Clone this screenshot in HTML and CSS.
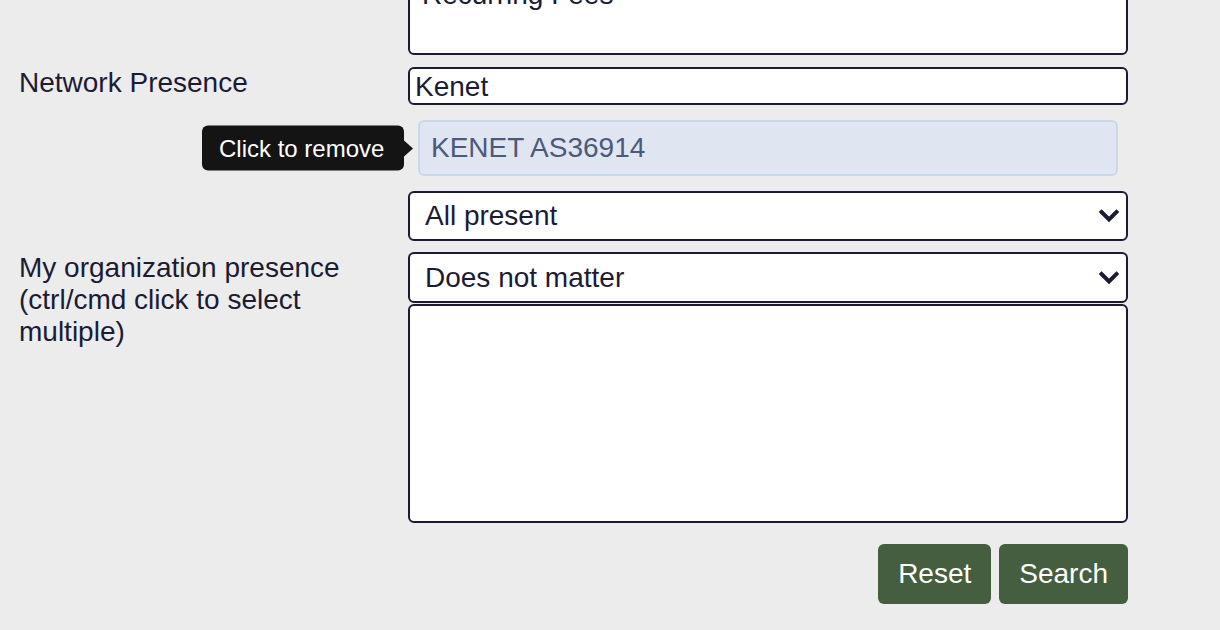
FILE: index.html
```html
<!DOCTYPE html>
<html>
<head>
<meta charset="utf-8">
<link rel="stylesheet" href="styles.css">
</head>
<body>
<form class="form">
  <div class="row row-fees">
    <div class="label"></div>
    <div class="field">
      <textarea class="textarea">Recurring Fees</textarea>
    </div>
  </div>
  <div class="row row-network">
    <div class="label">Network Presence</div>
    <div class="field">
      <input class="input" type="text" value="Kenet">
    </div>
  </div>
  <div class="row row-chip">
    <div class="label"></div>
    <div class="field">
      <div class="chip">
        KENET AS36914
        <div class="tooltip">Click to remove</div>
      </div>
    </div>
  </div>
  <div class="row row-present">
    <div class="label"></div>
    <div class="field">
      <div class="select-wrap">
        <select class="select"><option>All present</option></select>
        <svg class="chevron" width="20" height="14" viewBox="0 0 20 14"><path d="M2.5 3 L10 10.5 L17.5 3" fill="none" stroke="#1b1b33" stroke-width="4" stroke-linecap="square"/></svg>
      </div>
    </div>
  </div>
  <div class="row row-org">
    <div class="label label-org">My organization presence (ctrl/cmd click to select multiple)</div>
    <div class="field field-stack">
      <div class="select-wrap">
        <select class="select"><option>Does not matter</option></select>
        <svg class="chevron" width="20" height="14" viewBox="0 0 20 14"><path d="M2.5 3 L10 10.5 L17.5 3" fill="none" stroke="#1b1b33" stroke-width="4" stroke-linecap="square"/></svg>
      </div>
      <select class="multi" multiple></select>
    </div>
  </div>
  <div class="row row-buttons">
    <div class="label"></div>
    <div class="field buttons">
      <button type="button" class="btn">Reset</button>
      <button type="button" class="btn">Search</button>
    </div>
  </div>
</form>
</body>
</html>
```

FILE: styles.css
```css
html, body {
  margin: 0;
  padding: 0;
  background: #ececec;
  overflow: hidden;
}
body {
  font-family: "Liberation Sans", Arial, Helvetica, sans-serif;
  color: #1b1b33;
  font-size: 28px;
  line-height: 32px;
}
.form {
  margin-top: -27px;
  padding-left: 19px;
}
.row {
  display: flex;
  align-items: flex-start;
}
.label {
  width: 389px;
  flex: none;
  box-sizing: border-box;
  padding-right: 20px;
  font-size: 28px;
  line-height: 32px;
  margin-top: 0;
}
.field {
  width: 720px;
  flex: none;
}
.textarea {
  display: block;
  box-sizing: border-box;
  width: 720px;
  height: 82px;
  margin: 0;
  padding: 4px 12px;
  border: 2px solid #1b1b33;
  border-radius: 6px;
  background: #fff;
  font: inherit;
  color: #1b1b33;
  resize: none;
  overflow: hidden;
}
.row-network { margin-top: 12px; }
.input {
  display: block;
  box-sizing: border-box;
  width: 720px;
  height: 38px;
  margin: 0;
  padding: 1px 5px 0;
  border: 2px solid #1b1b33;
  border-radius: 6px;
  background: #fff;
  font: inherit;
  color: #1b1b33;
  outline: none;
}
.row-chip { margin-top: 15px; }
.chip {
  position: relative;
  box-sizing: border-box;
  margin: 0 10px;
  height: 56px;
  display: flex;
  align-items: center;
  padding: 0 11px;
  background: #dfe6f2;
  border: 2px solid #c9d9ea;
  border-radius: 6px;
  color: #4b5a7b;
}
.tooltip {
  position: absolute;
  right: calc(100% + 16px);
  top: 50%;
  transform: translateY(-50%);
  box-sizing: border-box;
  width: 202px;
  height: 45px;
  display: flex;
  align-items: center;
  padding: 0 17px;
  background: #141414;
  color: #fff;
  font-size: 24px;
  border-radius: 6px;
  white-space: nowrap;
}
.tooltip::after {
  content: "";
  position: absolute;
  left: 100%;
  top: 50%;
  margin-top: -8px;
  border-style: solid;
  border-width: 8px 0 8px 9px;
  border-color: transparent transparent transparent #141414;
}
.row-present { margin-top: 15px; }
.select-wrap {
  position: relative;
}
.select {
  display: block;
  box-sizing: border-box;
  width: 720px;
  height: 50px;
  margin: 0;
  padding: 0 15px;
  border: 2px solid #1b1b33;
  border-radius: 6px;
  background: #fff;
  font: inherit;
  color: #1b1b33;
  -webkit-appearance: none;
  appearance: none;
  outline: none;
}
.chevron {
  position: absolute;
  right: 9px;
  top: 50%;
  margin-top: -7px;
  pointer-events: none;
}
.row-org { margin-top: 11px; }
.row-org .select { height: 51px; }
.field-stack {
  display: flex;
  flex-direction: column;
  gap: 1px;
}
.multi {
  display: block;
  box-sizing: border-box;
  width: 720px;
  height: 219px;
  margin: 0;
  border: 2px solid #1b1b33;
  border-radius: 6px;
  background: #fff;
  outline: none;
}
.row-buttons { margin-top: 21px; }
.buttons {
  display: flex;
  justify-content: flex-end;
  gap: 8px;
}
.btn {
  height: 60px;
  padding: 0 20px;
  border: none;
  border-radius: 6px;
  background: #445e3f;
  color: #fff;
  font: inherit;
  cursor: pointer;
}
```
